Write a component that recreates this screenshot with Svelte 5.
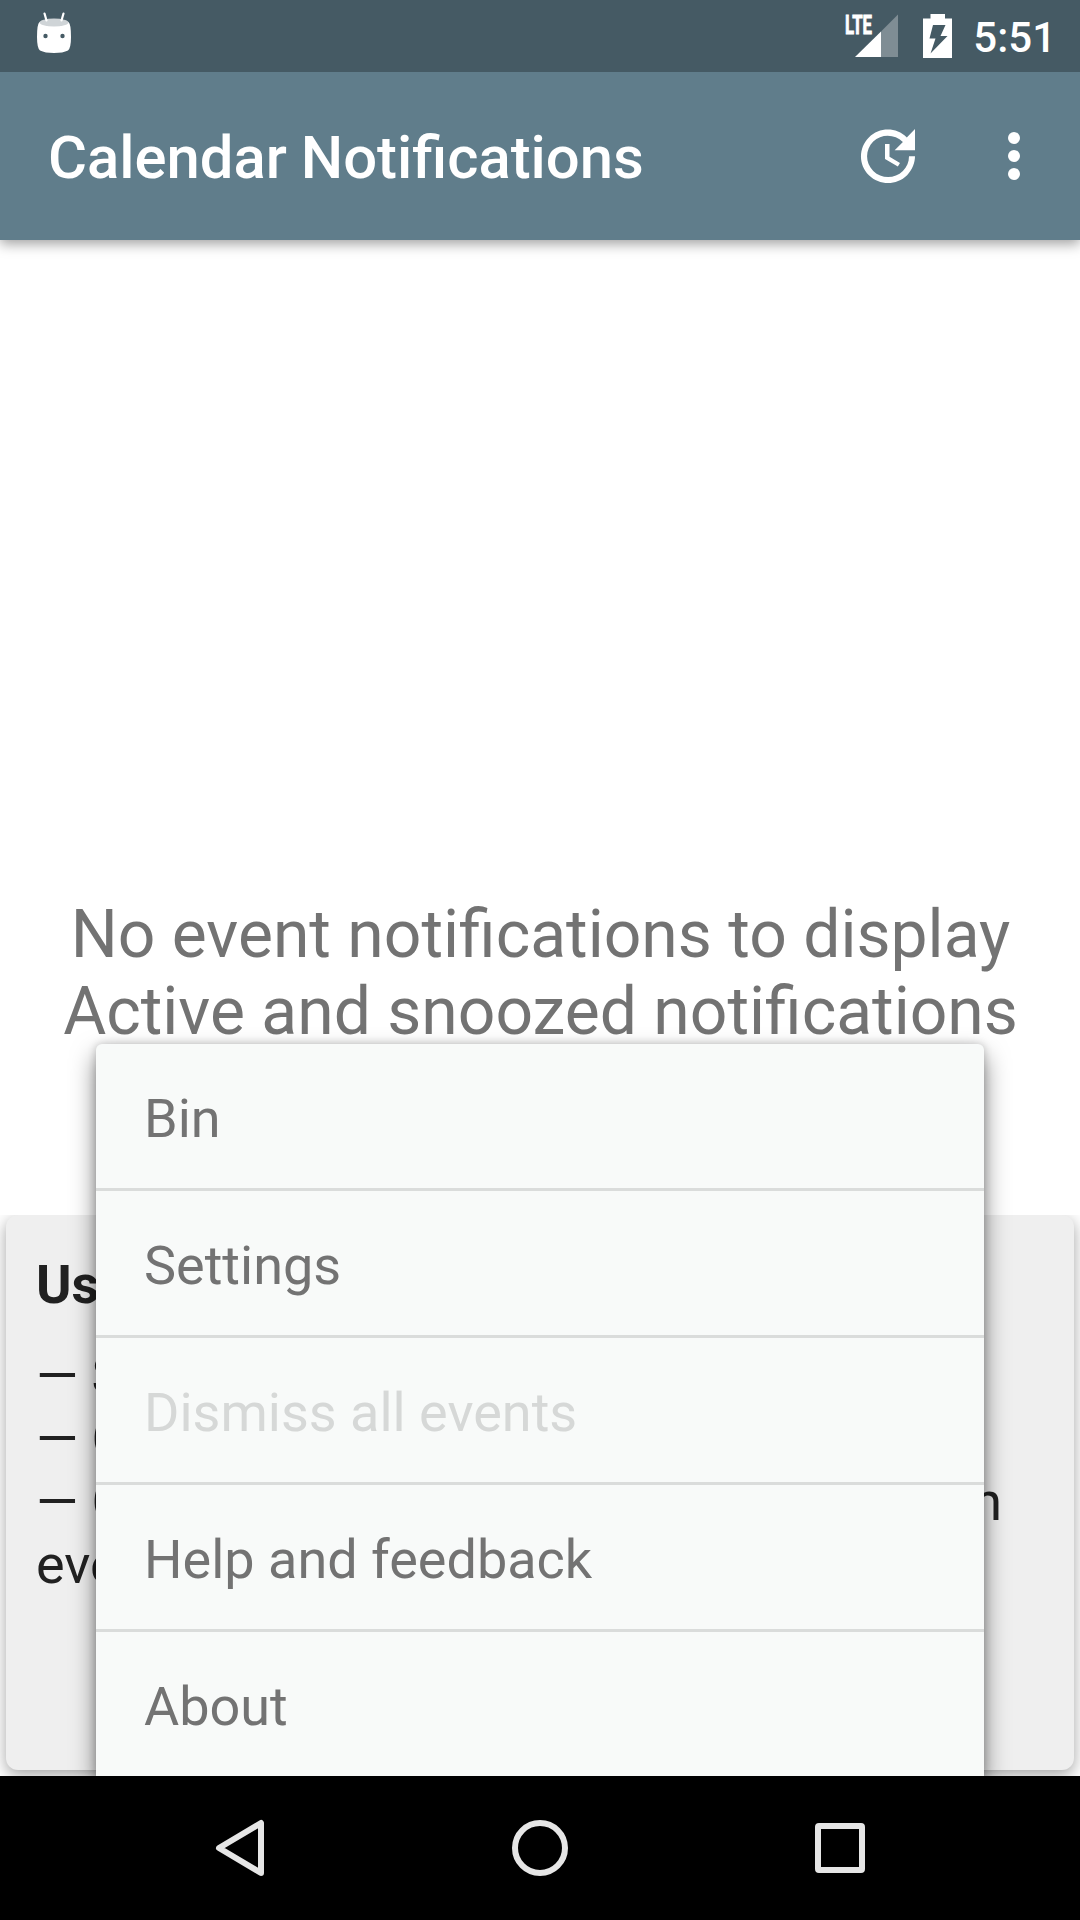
<script>
  const menu = [
    { label: 'Bin' },
    { label: 'Settings' },
    { label: 'Dismiss all events', disabled: true },
    { label: 'Help and feedback' },
    { label: 'About' }
  ];
  const tips = [['— S'], ['— C'], ['— C', 'n'], ['eve']];
</script>

<div class="screen">
  <header class="status">
    <svg class="droid" width="36" height="44" viewBox="0 0 36 44">
      <path d="M3.500 12Q18 18 32.500 12Q35 14 35 27Q35 38 32 40.500Q27 43 18 43Q9 43 4 40.500Q1 38 1 27Q1 14 3.500 12Z" fill="#fff" />
      <ellipse cx="18" cy="12.500" rx="14.500" ry="4" fill="#cfd4d7" />
      <path d="M8.500 3.500L10.500 10.500M27.500 3.500L25.500 10.500" stroke="#fff" stroke-width="2.200" stroke-linecap="round" />
      <circle cx="9.500" cy="26" r="2.200" fill="#455a64" />
      <circle cx="26.500" cy="26" r="2.200" fill="#455a64" />
    </svg>
    <div class="indicators">
      <svg width="54" height="44" viewBox="0 0 54 44">
        <text class="lte" x="1" y="19.500" textLength="27" lengthAdjust="spacingAndGlyphs">LTE</text>
        <path d="M37 17.500L54 .5V43H37Z" fill="#7f8d94" />
        <path d="M11 43L37 17.500V43Z" fill="#fff" />
      </svg>
      <svg class="battery" width="29" height="44" viewBox="0 0 29 44">
        <path fill="#fff" fill-rule="evenodd" d="M7.500 0H22V4.500H29V44H0V4.500H7.500ZM10 11L6.500 24.500H12.500L7.500 39.500L24.500 22H17.500L22.500 11Z" />
      </svg>
      <span class="time">5:51</span>
    </div>
  </header>

  <div class="toolbar">
    <h1>Calendar Notifications</h1>
    <svg width="72" height="72" viewBox="0 0 24 24" fill="#fff">
      <path d="M21 10.120h-6.780l2.740-2.820c-2.730-2.700-7.150-2.800-9.880-.1-2.730 2.710-2.730 7.080 0 9.790s7.150 2.710 9.880 0C18.320 15.650 19 14.080 19 12.100h2c0 1.980-.88 4.550-2.640 6.290-3.510 3.480-9.210 3.480-12.720 0-3.500-3.470-3.530-9.110-.02-12.580s9.140-3.470 12.650 0L21 3v7.120zM12.500 8v4.250l3.500 2.080-.72 1.210L11 13V8h1.500z" />
    </svg>
    <svg width="72" height="72" viewBox="0 0 24 24" fill="#fff">
      <circle cx="12" cy="6" r="2" /><circle cx="12" cy="12" r="2" /><circle cx="12" cy="18" r="2" />
    </svg>
  </div>

  <main>
    <p class="empty">No event notifications to display<br />Active and snoozed notifications</p>
    <div class="card-area">
      <section class="card">
        <h2>Us</h2>
        {#each tips as line}
          <div class="tip">{#each line as part}<span>{part}</span>{/each}</div>
        {/each}
      </section>
    </div>
    <ul class="menu">
      {#each menu as item}
        <li class:disabled={item.disabled}>{item.label}</li>
      {/each}
    </ul>
  </main>

  <nav>
    <svg width="72" height="72" viewBox="0 0 72 72"><path d="M57 11V61L15 36Z" /></svg>
    <svg width="72" height="72" viewBox="0 0 72 72"><circle cx="36" cy="36" r="25" /></svg>
    <svg width="72" height="72" viewBox="0 0 72 72"><rect x="14" y="14" width="44" height="44" rx="1" /></svg>
  </nav>
</div>

<style>
  :global(body) { margin: 0; }
  .screen {
    width: 1080px;
    height: 1920px;
    display: flex;
    flex-direction: column;
    overflow: hidden;
    background: #fff;
    font-family: Roboto, sans-serif;
  }
  svg { display: block; flex: none; overflow: visible; }
  .status {
    height: 72px;
    flex: none;
    box-sizing: border-box;
    padding: 0 24px 0 36px;
    display: flex;
    justify-content: space-between;
    align-items: center;
    background: #455a64;
    z-index: 2;
  }
  .droid { margin-bottom: 8px; }
  .indicators { display: flex; align-items: center; }
  .battery { margin-left: 25px; }
  .lte { font: 700 26px Roboto, sans-serif; fill: #fff; stroke: #fff; stroke-width: .9; }
  .time {
    margin-left: 21px;
    font-size: 42px;
    font-weight: 500;
    line-height: 50px;
    padding-top: 4px;
    color: #fff;
  }
  .toolbar {
    height: 168px;
    flex: none;
    box-sizing: border-box;
    padding: 0 30px 0 48px;
    display: flex;
    align-items: center;
    gap: 54px;
    background: #607d8b;
    box-shadow: 0 4px 12px rgba(0, 0, 0, .37);
    z-index: 1;
  }
  h1 {
    flex: 1;
    margin: 0;
    padding-top: 4px;
    font-size: 59.800px;
    font-weight: 500;
    line-height: 70px;
    word-spacing: -1px;
    color: #fff;
  }
  main {
    position: relative;
    flex: 1;
    display: flex;
    flex-direction: column;
    overflow: hidden;
  }
  .empty {
    margin: 0;
    padding: 656px 0 0 1px;
    flex: 1;
    text-align: center;
    font-size: 66px;
    line-height: 77px;
    color: #737373;
  }
  .card-area {
    height: 561px;
    flex: none;
    overflow: hidden;
    box-sizing: border-box;
    padding: 0 6px 6px;
  }
  .card {
    height: 555px;
    box-sizing: border-box;
    padding: 38px 72px 0 30px;
    border-radius: 12px;
    background: #efefef;
    box-shadow: 0 5px 16px rgba(0, 0, 0, .36);
    color: #212121;
  }
  h2 {
    margin: 0 0 27px;
    font-size: 54px;
    font-weight: 700;
    line-height: 64px;
  }
  .tip {
    display: flex;
    justify-content: space-between;
    font-size: 54px;
    line-height: 63px;
  }
  .menu {
    position: absolute;
    left: 96px;
    right: 96px;
    bottom: 0;
    margin: 0;
    padding: 0;
    list-style: none;
    border-radius: 6px 6px 0 0;
    background: #f8faf9;
    box-shadow: 0 12px 24px rgba(0, 0, 0, .5), 0 0 8px rgba(0, 0, 0, .2);
  }
  li {
    padding: 5px 0 0 48px;
    font-size: 54px;
    line-height: 139px;
    color: #737373;
  }
  li + li { border-top: 3px solid #dadcdb; }
  .disabled { color: #d6d8d7; }
  nav {
    height: 144px;
    flex: none;
    display: flex;
    align-items: center;
    justify-content: center;
    gap: 228px;
    background: #000;
  }
  nav svg {
    fill: none;
    stroke: #e6e6e6;
    stroke-width: 6;
    stroke-linejoin: round;
  }
</style>
